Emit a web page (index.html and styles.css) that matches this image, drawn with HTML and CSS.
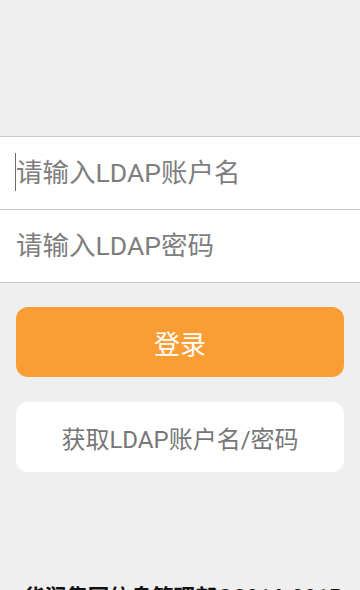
FILE: index.html
```html
<!DOCTYPE html>
<html lang="zh">
<head>
<meta charset="utf-8">
<link rel="stylesheet" href="styles.css">
</head>
<body>
<div class="page">
  <div class="form">
    <div class="field"><span class="caret"></span><span class="ph">请输入LDAP账户名</span></div>
    <div class="field"><span class="ph">请输入LDAP密码</span></div>
  </div>
  <div class="actions">
    <div class="btn btn-primary">登录</div>
    <div class="btn btn-secondary">获取LDAP账户名/密码</div>
  </div>
  <div class="footer">华润集团信息管理部©2014-2015</div>
</div>
</body>
</html>
```
FILE: styles.css
```css
html, body {
  margin: 0;
  padding: 0;
  background: #efefef;
}
.page {
  width: 360px;
  height: 590px;
  overflow: hidden;
  font-family: Roboto, "Noto Sans CJK SC", sans-serif;
  padding-top: 136px;
  box-sizing: border-box;
}
.form {
  border-top: 1px solid #c9c9c9;
}
.field {
  height: 72px;
  background: #fff;
  border-bottom: 1px solid #c9c9c9;
  display: flex;
  align-items: center;
  padding-left: 16px;
  position: relative;
}
.ph {
  font-size: 26.5px;
  color: #7e7e7e;
  line-height: 1;
}
.caret {
  position: absolute;
  left: 15px;
  top: 16px;
  width: 1px;
  height: 38px;
  background: #6a6a6a;
}
.actions {
  padding: 24px 16px 0;
  display: flex;
  flex-direction: column;
  gap: 25px;
}
.btn {
  height: 70px;
  border-radius: 12px;
  display: flex;
  align-items: center;
  justify-content: center;
}
.btn-primary {
  background: #fa9d34;
  color: #fff;
  font-size: 26px;
}
.btn-secondary {
  background: #fff;
  color: #777;
  font-size: 24px;
}
.footer {
  margin-top: 113px;
  text-align: center;
  font-size: 21.5px;
  font-weight: bold;
  color: #111;
  line-height: 26px;
  padding-left: 4px;
}
```
